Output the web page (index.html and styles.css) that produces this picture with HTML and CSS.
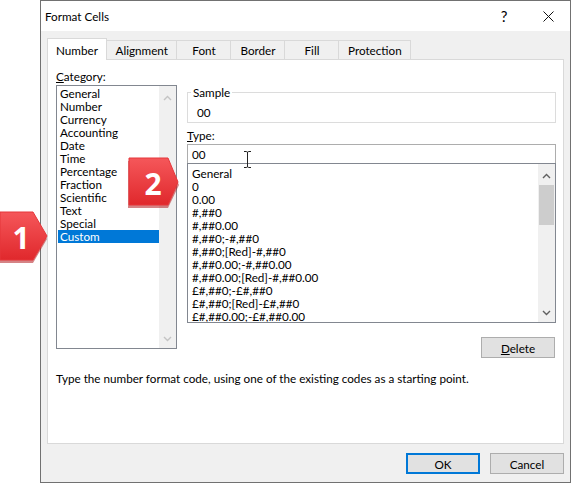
FILE: index.html
```html
<!DOCTYPE html>
<html lang="en">
<head>
    <meta charset="UTF-8">
    <title>Format Cells</title>
    <link rel="stylesheet" href="styles.css">
</head>
<body>
    <div class="stage">
        <!-- callout 1: points at the Custom category -->
        <svg class="callout callout-one" width="52" height="54" viewBox="0 0 52 54">
            <defs>
                <linearGradient id="redFill" x1="0" y1="0" x2="0" y2="1">
                    <stop offset="0" stop-color="#f5575a"/>
                    <stop offset="1" stop-color="#e0282c"/>
                </linearGradient>
            </defs>
            <polygon points="0,5 33,5 47,29 33,53 0,53" fill="#b31d21" opacity="0.55"/>
            <polygon points="0,2 33,2 47,26 33,50 0,50" fill="url(#redFill)" stroke="#e6363a" stroke-linejoin="round"/>
            <text x="21" y="27" class="callout-num">1</text>
        </svg>

        <div class="dialog">
            <div class="titlebar">
                <span class="title">Format Cells</span>
                <div class="title-buttons">
                    <span class="title-btn help">?</span>
                    <span class="title-btn">
                        <svg width="11" height="11" viewBox="0 0 11 11">
                            <path d="M0.5 0.5 L10.5 10.5 M10.5 0.5 L0.5 10.5" stroke="#111" stroke-width="1"/>
                        </svg>
                    </span>
                </div>
            </div>

            <div class="dialog-body">
                <div class="tabs">
                    <span class="tab active">Number</span>
                    <span class="tab">Alignment</span>
                    <span class="tab">Font</span>
                    <span class="tab">Border</span>
                    <span class="tab">Fill</span>
                    <span class="tab">Protection</span>
                </div>

                <div class="panel">
                    <div class="number-page">
                        <div class="field-label"><u>C</u>ategory:</div>

                        <div class="listbox category-list">
                            <ul class="items">
                                <li>General</li>
                                <li>Number</li>
                                <li>Currency</li>
                                <li>Accounting</li>
                                <li>Date</li>
                                <li>Time</li>
                                <li>Percentage</li>
                                <li>Fraction</li>
                                <li>Scientific</li>
                                <li>Text</li>
                                <li>Special</li>
                                <li class="selected">Custom</li>
                            </ul>
                            <div class="scrollbar disabled">
                                <span class="arrow up">
                                    <svg width="9" height="6" viewBox="0 0 9 6"><polyline points="1,5 4.5,1.5 8,5" fill="none" stroke="currentColor" stroke-width="1.4"/></svg>
                                </span>
                                <span class="track"></span>
                                <span class="arrow down">
                                    <svg width="9" height="6" viewBox="0 0 9 6"><polyline points="1,1 4.5,4.5 8,1" fill="none" stroke="currentColor" stroke-width="1.4"/></svg>
                                </span>
                            </div>
                        </div>

                        <div class="format-side">
                            <fieldset class="sample">
                                <legend>Sample</legend>
                                <div class="sample-value">00</div>
                            </fieldset>

                            <div class="field-label type-label"><u>T</u>ype:</div>
                            <div class="type-input">
                                00
                                <svg class="ibeam" width="9" height="17" viewBox="0 0 9 17">
                                    <path d="M1 0.5 H3.5 Q4.5 0.5 4.5 2 V15 Q4.5 16.5 3.5 16.5 H1 M8 0.5 H5.5 Q4.5 0.5 4.5 2 M4.5 15 Q4.5 16.5 5.5 16.5 H8" fill="none" stroke="#222" stroke-width="1"/>
                                </svg>
                            </div>

                            <div class="listbox type-list">
                                <ul class="items">
                                    <li>General</li>
                                    <li>0</li>
                                    <li>0.00</li>
                                    <li>#,##0</li>
                                    <li>#,##0.00</li>
                                    <li>#,##0;-#,##0</li>
                                    <li>#,##0;[Red]-#,##0</li>
                                    <li>#,##0.00;-#,##0.00</li>
                                    <li>#,##0.00;[Red]-#,##0.00</li>
                                    <li>£#,##0;-£#,##0</li>
                                    <li>£#,##0;[Red]-£#,##0</li>
                                    <li>£#,##0.00;-£#,##0.00</li>
                                </ul>
                                <div class="scrollbar">
                                    <span class="arrow up">
                                        <svg width="9" height="6" viewBox="0 0 9 6"><polyline points="1,5 4.5,1.5 8,5" fill="none" stroke="currentColor" stroke-width="1.4"/></svg>
                                    </span>
                                    <span class="track"><span class="thumb"></span></span>
                                    <span class="arrow down">
                                        <svg width="9" height="6" viewBox="0 0 9 6"><polyline points="1,1 4.5,4.5 8,1" fill="none" stroke="currentColor" stroke-width="1.4"/></svg>
                                    </span>
                                </div>
                            </div>

                            <div class="delete-row">
                                <button class="btn"><u>D</u>elete</button>
                            </div>
                        </div>

                        <p class="hint">Type the number format code, using one of the existing codes as a starting point.</p>
                    </div>
                </div>

                <div class="footer">
                    <button class="btn default">OK</button>
                    <button class="btn">Cancel</button>
                </div>
            </div>
        </div>

        <!-- callout 2: points at the Type list -->
        <svg class="callout callout-two" width="56" height="54" viewBox="0 0 56 54">
            <polygon points="0,5 40,5 51,29 40,52 0,52" fill="#b31d21" opacity="0.55"/>
            <polygon points="1,2 40,2 50,26 40,49 1,49" fill="url(#redFill)" stroke="#e6363a" stroke-linejoin="round"/>
            <text x="25" y="27" class="callout-num">2</text>
        </svg>
    </div>
</body>
</html>
```

FILE: styles.css
```css
/* Windows 10 style dialog */
:root {
    --face: #f0f0f0;
    --edge: #d9d9d9;
    --field-edge: #adadad;
    --list-edge: #828790;
    --accent: #0078d7;
}

body {
    margin: 0;
    background: #fff;
    font-family: Lato, "Noto Sans", sans-serif;
    font-size: 11.7px;
    color: #000;
}

.stage {
    position: relative;
    width: 572px;
    height: 484px;
    padding-left: 40px;
    box-sizing: border-box;
}

.dialog {
    width: 531px;
    height: 483px;
    box-sizing: border-box;
    border: 1px solid #717171;
    background: var(--face);
    display: flex;
    flex-direction: column;
}

/* title bar */
.titlebar {
    height: 30px;
    background: #fff;
    display: flex;
    align-items: center;
}

.title {
    padding-left: 4px;
}

.title-buttons {
    margin-left: auto;
    display: flex;
}

.title-btn {
    width: 44px;
    height: 30px;
    display: flex;
    align-items: center;
    justify-content: center;
}

.help {
    font-size: 15px;
}

.dialog-body {
    flex: 1;
    padding: 7px 6px 0;
    display: flex;
    flex-direction: column;
}

/* tabs */
.tabs {
    display: flex;
    align-items: flex-end;
    height: 21px;
}

.tab {
    height: 19px;
    line-height: 18px;
    box-sizing: border-box;
    min-width: 55px;
    padding: 0 8.5px;
    text-align: center;
    background: var(--face);
    border: 1px solid var(--edge);
    border-bottom: none;
    margin-left: -1px;
}

.tab.active {
    height: 22px;
    line-height: 22px;
    min-width: 60px;
    padding: 0 7px;
    margin-left: 0;
    margin-bottom: -1px;
    background: #fff;
    position: relative;
    z-index: 1;
}

.panel {
    height: 385px;
    box-sizing: border-box;
    border: 1px solid var(--edge);
    background: #fff;
    padding: 7px 6px 0 8px;
}

.number-page {
    display: grid;
    grid-template-columns: 121px 369px;
    grid-template-rows: 18px 273px auto;
    column-gap: 10px;
}

.field-label {
    line-height: 18px;
}

/* list boxes */
.listbox {
    display: flex;
    box-sizing: border-box;
    border: 1px solid var(--list-edge);
    background: #fff;
    overflow: hidden;
}

.items {
    flex: 1;
    list-style: none;
    margin: 0;
    padding: 0;
}

.items li {
    height: 13px;
    line-height: 13px;
    white-space: nowrap;
}

.category-list {
    grid-column: 1;
    grid-row: 2;
    height: 264px;
}

.category-list .items {
    padding: 1px 0 0 1px;
}

.category-list .items li {
    padding-left: 2px;
}

.category-list .items li.selected {
    background: var(--accent);
    color: #fff;
}

.type-list {
    height: 160px;
}

.type-list .items {
    padding: 3px 0 0 4px;
}

.scrollbar {
    width: 17px;
    background: var(--face);
    display: flex;
    flex-direction: column;
    color: #606060;
}

.scrollbar.disabled {
    color: #c4c4c4;
}

.arrow {
    height: 19px;
    display: flex;
    justify-content: center;
    align-items: center;
}

.arrow.up {
    padding-top: 2px;
}

.arrow.down {
    height: 18px;
}

.track {
    flex: 1;
}

.thumb {
    display: block;
    height: 40px;
    margin: 0 1px;
    background: #cdcdcd;
}

/* right side */
.format-side {
    grid-column: 2;
    grid-row: 2;
    display: flex;
    flex-direction: column;
}

.sample {
    margin: 0;
    padding: 0 3px;
    height: 38px;
    box-sizing: border-box;
    border: 1px solid #dcdcdc;
}

.sample legend {
    padding: 0 2px;
    line-height: 14px;
}

.sample-value {
    padding: 5px 0 0 6px;
    line-height: 16px;
}

.type-label {
    margin-top: 4px;
    line-height: 16px;
}

.type-input {
    position: relative;
    margin-top: 1px;
    height: 19px;
    line-height: 18px;
    box-sizing: border-box;
    padding-left: 4px;
    border: 1px solid var(--field-edge);
    border-bottom: none;
}

.ibeam {
    position: absolute;
    left: 55px;
    top: 6px;
}

.delete-row {
    display: flex;
    justify-content: flex-end;
    margin-top: 14px;
    padding-right: 1px;
}

.hint {
    grid-column: 1 / span 2;
    margin: 12px 0 0;
    line-height: 16px;
}

/* buttons */
.btn {
    width: 74px;
    height: 21px;
    padding: 0;
    font: inherit;
    color: #000;
    background: #e1e1e1;
    border: 1px solid var(--field-edge);
}

.btn.default {
    border-color: var(--accent);
    box-shadow: inset 0 0 0 1px var(--accent);
}

.footer {
    display: flex;
    justify-content: flex-end;
    gap: 10px;
    margin-top: 9px;
}

/* red step callouts */
.callout {
    position: absolute;
    z-index: 2;
}

.callout-one {
    left: 0;
    top: 210px;
}

.callout-two {
    left: 128px;
    top: 156px;
}

.callout-num {
    font-family: "Noto Sans", sans-serif;
    font-weight: 700;
    font-size: 30px;
    fill: #fff;
    text-anchor: middle;
    dominant-baseline: central;
}
```
